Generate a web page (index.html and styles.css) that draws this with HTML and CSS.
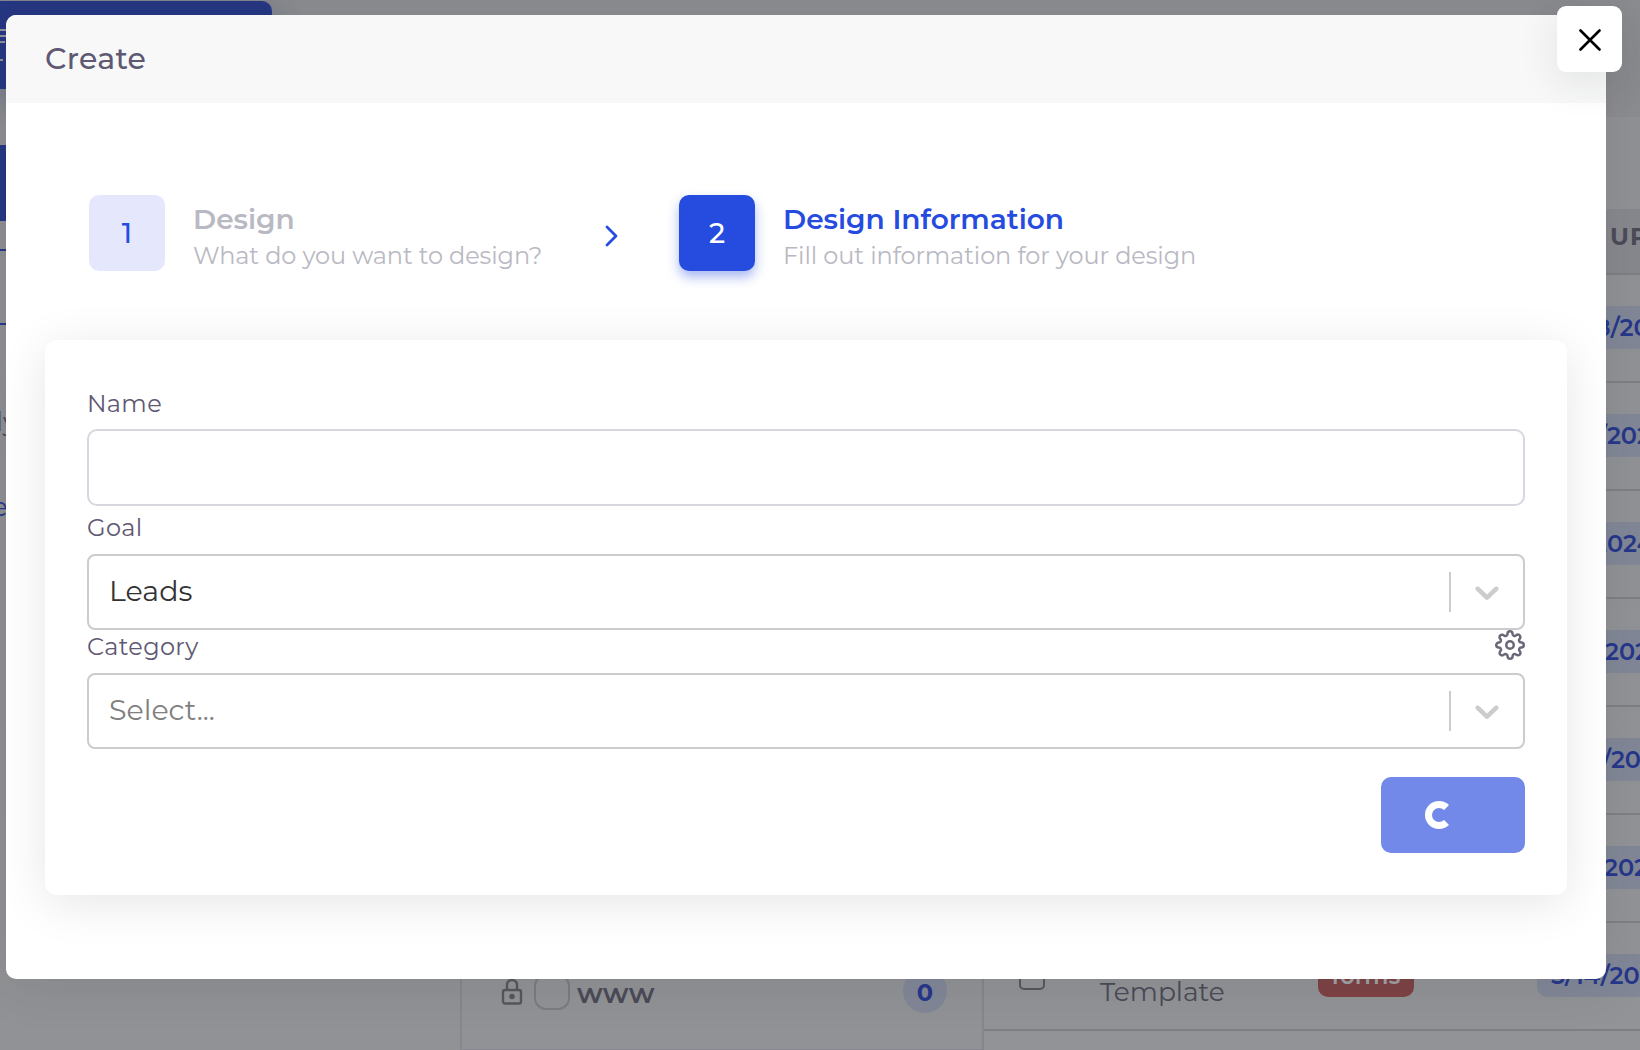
FILE: index.html
```
<!DOCTYPE html>
<html lang="en">
<head>
<meta charset="utf-8">
<title>Create</title>
<link rel="stylesheet" href="styles.css">
</head>
<body>
<div class="page">
  <aside class="sidebar">
    <div class="brand">
      <svg width="8" height="40" viewBox="0 0 8 40" fill="none" stroke="#8f929b" stroke-width="2"><path d="M0 5h8M0 11h8M0 17h5M0 35h3"/></svg>
    </div>
    <div class="nav-active"></div>
    <div class="nav-box"></div>
    <span class="nav-text">ly</span>
    <span class="nav-text nav-link">e</span>
  </aside>
  <section class="folders">
    <div class="folder">
      <svg class="lock" width="22" height="28" viewBox="0 0 22 28" fill="none" stroke="#56575c" stroke-width="2.400"><rect x="2" y="12" width="18" height="13.500" rx="2"/><path d="M6 12V7a5 5 0 0 1 10 0v5"/><circle cx="11" cy="18.500" r="1.600" fill="#56575c"/></svg>
      <span class="swatch"></span>
      <span class="folder-name">www</span>
      <span class="count">0</span>
    </div>
  </section>
  <section class="table">
    <div class="thead">UPDATED</div>
    <div class="row"><span class="date" style="padding-left:58px">8/2024</span></div>
    <div class="row"><span class="date" style="padding-left:61px">/2024</span></div>
    <div class="row"><span class="date" style="padding-left:56px">2024</span></div>
    <div class="row"><span class="date" style="padding-left:68px">2024</span></div>
    <div class="row"><span class="date" style="padding-left:65px">/2024</span></div>
    <div class="row"><span class="date" style="padding-left:67px">2024</span></div>
    <div class="row">
      <span class="check"></span>
      <span class="type">Template</span>
      <span class="tag">forms</span>
      <span class="date" style="padding-left:14px">5/14/2024</span>
    </div>
  </section>
</div>

<div class="modal">
  <header class="modal-head">Create</header>
  <button class="close" aria-label="Close">
    <svg width="22" height="22" viewBox="0 0 22 22" fill="none" stroke="#000" stroke-width="2.600" stroke-linecap="round"><path d="M1.500 1.500l19 19M20.500 1.500l-19 19"/></svg>
  </button>
  <div class="steps">
    <div class="step first">
      <span class="num">1</span>
      <div class="step-text"><div class="step-title">Design</div><div class="step-sub">What do you want to design?</div></div>
    </div>
    <svg class="next" width="13" height="22" viewBox="0 0 13 22" fill="none" stroke="#264bdf" stroke-width="2.800" stroke-linecap="round" stroke-linejoin="round"><path d="M2 2l9 9-9 9"/></svg>
    <div class="step active">
      <span class="num">2</span>
      <div class="step-text"><div class="step-title">Design Information</div><div class="step-sub">Fill out information for your design</div></div>
    </div>
  </div>
  <div class="card">
    <div class="label">Name</div>
    <div class="input"></div>
    <div class="label goal">Goal</div>
    <div class="select">
      <span class="value">Leads</span><span class="sep"></span>
      <svg class="caret" width="40" height="40" viewBox="0 0 20 20" fill="#ccc"><path d="M4.516 7.548c0.436-0.446 1.043-0.481 1.576 0l3.908 3.747 3.908-3.747c0.533-0.481 1.141-0.446 1.574 0 0.436 0.445 0.408 1.197 0 1.615-0.406 0.418-4.695 4.502-4.695 4.502-0.217 0.223-0.502 0.335-0.787 0.335s-0.570-0.112-0.789-0.335c0 0-4.287-4.084-4.695-4.502s-0.436-1.170 0-1.615z"/></svg>
    </div>
    <div class="label category">
      <span>Category</span>
      <svg width="30" height="30" viewBox="0 0 24 24" fill="none" stroke="#6a6779" stroke-width="2" stroke-linecap="round" stroke-linejoin="round"><circle cx="12" cy="12" r="3"/><path d="M19.400 15a1.650 1.650 0 0 0 .33 1.820l.06.06a2 2 0 0 1 0 2.830 2 2 0 0 1-2.830 0l-.06-.06a1.650 1.650 0 0 0-1.820-.33 1.650 1.650 0 0 0-1 1.510V21a2 2 0 0 1-2 2 2 2 0 0 1-2-2v-.09A1.650 1.650 0 0 0 9 19.400a1.650 1.650 0 0 0-1.820.33l-.06.06a2 2 0 0 1-2.830 0 2 2 0 0 1 0-2.830l.06-.06a1.650 1.650 0 0 0 .33-1.820 1.650 1.650 0 0 0-1.510-1H3a2 2 0 0 1-2-2 2 2 0 0 1 2-2h.09A1.650 1.650 0 0 0 4.600 9a1.650 1.650 0 0 0-.33-1.820l-.06-.06a2 2 0 0 1 0-2.830 2 2 0 0 1 2.830 0l.06.06a1.650 1.650 0 0 0 1.820.33H9a1.650 1.650 0 0 0 1-1.510V3a2 2 0 0 1 2-2 2 2 0 0 1 2 2v.09a1.650 1.650 0 0 0 1 1.510 1.650 1.650 0 0 0 1.820-.33l.06-.06a2 2 0 0 1 2.830 0 2 2 0 0 1 0 2.830l-.06.06a1.650 1.650 0 0 0-.33 1.820V9a1.650 1.650 0 0 0 1.510 1H21a2 2 0 0 1 2 2 2 2 0 0 1-2 2h-.09a1.650 1.650 0 0 0-1.510 1z"/></svg>
    </div>
    <div class="select">
      <span class="value placeholder">Select...</span><span class="sep"></span>
      <svg class="caret" width="40" height="40" viewBox="0 0 20 20" fill="#ccc"><path d="M4.516 7.548c0.436-0.446 1.043-0.481 1.576 0l3.908 3.747 3.908-3.747c0.533-0.481 1.141-0.446 1.574 0 0.436 0.445 0.408 1.197 0 1.615-0.406 0.418-4.695 4.502-4.695 4.502-0.217 0.223-0.502 0.335-0.787 0.335s-0.570-0.112-0.789-0.335c0 0-4.287-4.084-4.695-4.502s-0.436-1.170 0-1.615z"/></svg>
    </div>
    <button class="submit" aria-label="Submitting"><span class="spinner"></span></button>
  </div>
</div>
</body>
</html>
```

FILE: styles.css
```
* { box-sizing: border-box; }
body {
  margin: 0;
  height: 1050px;
  overflow: hidden;
  position: relative;
  font-family: Montserrat, Inter, "Open Sans", sans-serif;
  color: #5e5873;
}

/* Dimmed page behind the dialog */
.page {
  display: grid;
  grid-template-columns: 460px 524px 1fr;
  height: 1050px;
  overflow: hidden;
  background: #8b8c8f;
}
.sidebar { display: flex; flex-direction: column; align-items: flex-start; background: linear-gradient(#8b8c8f, #8b8c8f 117px, #8e8f91 117px, #919295); }
.brand { width: 272px; height: 88px; margin-top: 1px; padding-top: 24px; border-radius: 0 10px 0 0; background: #263782; box-shadow: 0 8px 28px rgba(38, 55, 130, .35); }
.nav-active { width: 100%; height: 76px; margin-top: 56px; background: #263782; }
.nav-box { width: 100%; height: 76px; margin-top: 28px; border: solid #26388a; border-width: 2px 0; }
.nav-text { margin: 79px 0 0 -4px; font-size: 26px; line-height: 36px; color: #4b4a57; }
.nav-link { margin: 49px 0 0 -8px; color: #26378a; }

.folders { display: flex; flex-direction: column; justify-content: flex-end; margin-top: 117px; border: solid #85868e; border-width: 0 2px 1px; background: #919295; }
.folder { display: flex; align-items: center; height: 44px; margin-bottom: 36px; padding: 0 35px 0 39px; }
.lock { margin: 2px 11px 0 0; }
.swatch { width: 36px; height: 36px; margin-top: 2px; border: 2px solid #7b7c7f; border-radius: 12px; }
.folder-name { margin: 3px auto 0 7px; font-size: 28px; font-weight: 600; letter-spacing: .4px; color: #4b4a57; }
.count { width: 44px; height: 44px; border-radius: 50%; background: #828797; color: #26378a; font-size: 24px; font-weight: 700; line-height: 48px; text-align: center; }

.table { display: flex; flex-direction: column; margin-top: 117px; padding-top: 92px; overflow: hidden; background: linear-gradient(#8f9194, #929396); }
.thead { flex: none; height: 66px; padding-left: 626px; border-bottom: 2px solid #7e7f84; background: #87888d; font-size: 24px; font-weight: 700; letter-spacing: 1px; line-height: 56px; color: #4b4a57; }
.row { flex: none; display: flex; height: 108px; align-items: flex-start; padding: 31px 0 0 553px; border-bottom: 2px solid #7e7f84; white-space: nowrap; }
.row:last-child { padding-left: 35px; }
.row > * { flex: none; }
.date { width: 130px; height: 43px; border-radius: 10px; background: #828797; color: #26378a; font-size: 24px; font-weight: 600; line-height: 44px; }
.check { width: 26px; height: 26px; margin-top: 10px; border: 2px solid #56575c; border-radius: 5px; }
.type { width: 218px; margin: 20px 0 0 55px; font-size: 26.5px; line-height: 36px; color: #4b4a57; }
.tag { width: 96px; height: 43px; margin-right: 123px; border-radius: 10px; background: #7e4244; color: #a3a1a4; font-size: 23px; font-weight: 600; line-height: 44px; text-align: center; }

/* Dialog */
.modal {
  position: absolute;
  left: 6px;
  top: 15px;
  width: 1600px;
  height: 964px;
  border-radius: 10px;
  background: #fff;
  box-shadow: 0 8px 48px rgba(34, 41, 47, .1);
}
.modal-head { height: 88px; padding-left: 39px; border-radius: 10px 10px 0 0; background: #f8f8f8; font-size: 30px; font-weight: 500; letter-spacing: .3px; line-height: 88px; }
.close { position: absolute; right: -16px; top: -9px; display: grid; place-items: center; width: 65px; height: 66px; padding: 1px 0 0; border: 0; border-radius: 9px; background: #fff; box-shadow: 0 10px 40px rgba(34, 41, 47, .1); }

.steps { display: flex; margin: 92px 0 0 83px; height: 76px; }
.step { display: flex; color: #b9b9c3; }
.first { width: 516px; }
.num { width: 76px; height: 76px; border-radius: 10px; background: #e5e8fc; color: #264bdf; font-size: 28px; font-weight: 500; line-height: 76px; text-align: center; }
.step-text { margin: 6px 0 0 28px; white-space: nowrap; }
.step-title { font-size: 28px; font-weight: 600; line-height: 36px; }
.step-sub { font-size: 24px; letter-spacing: -.1px; line-height: 37px; }
.next { margin: 30px 61px 0 0; }
.active .num { background: #264bdf; color: #fff; box-shadow: 0 6px 12px rgba(38, 75, 223, .4); }
.active .step-title { color: #264bdf; }

.card { width: 1522px; height: 555px; margin: 69px 0 0 39px; padding: 46px 42px 42px; border-radius: 12px; background: #fff; box-shadow: 0 8px 48px rgba(0, 0, 0, .1); }
.label { display: flex; justify-content: space-between; font-size: 24px; letter-spacing: .35px; line-height: 36px; }
.input { height: 77px; margin-top: 7px; border: 2px solid #d8d6de; border-radius: 10px; }
.goal { margin: 4px 0 8px; }
.category { height: 43px; line-height: 33px; }
.select { display: flex; align-items: center; height: 76px; padding: 0 16px 0 20px; border: 2px solid #ccc; border-radius: 8px; }
.value { margin: -4px auto 0 0; font-size: 28.5px; color: #333; }
.placeholder { color: #808080; }
.sep { width: 2px; height: 40px; background: #ccc; }
.caret { margin-left: 16px; }
.submit { display: flex; align-items: center; width: 144px; height: 76px; margin: 28px 0 0 auto; padding: 0 0 0 44px; border: 0; border-radius: 10px; background: #7289e9; }
.spinner { width: 28px; height: 28px; border: 7px solid #fff; border-right-color: transparent; border-radius: 50%; }
```
